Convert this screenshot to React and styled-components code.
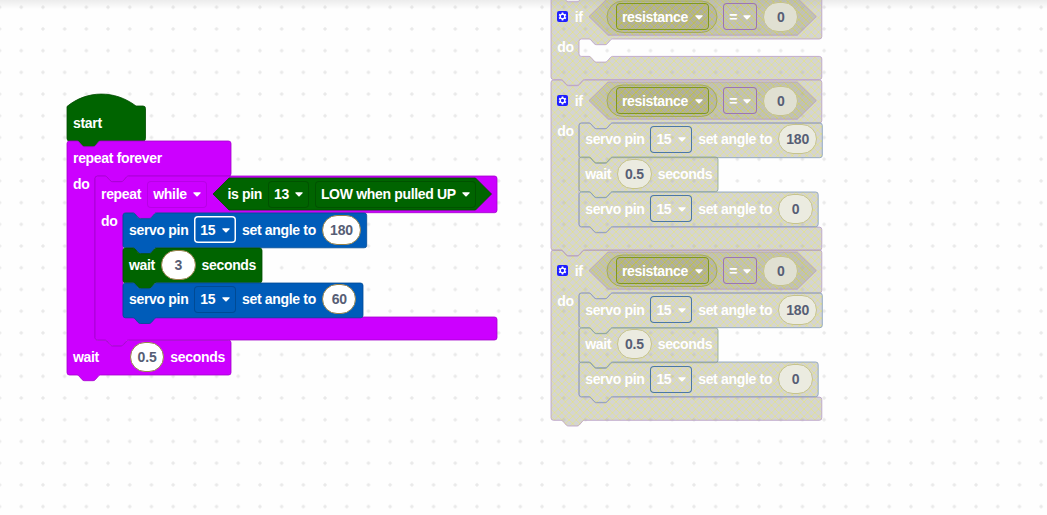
import React from "react";
import styled, { createGlobalStyle } from "styled-components";

const GlobalStyle = createGlobalStyle`
  html, body { margin: 0; padding: 0; height: 100%; overflow: hidden; background: #fefefe; }
  *, *::before, *::after { box-sizing: border-box; }
`;

const THEMES = {
  start: { fill: "#006400", stroke: "#004b00" },
  loop: { fill: "#cc00ff", stroke: "#a300cc" },
  servo: { fill: "#005cb9", stroke: "#004a94" },
  offLoop: { fill: "url(#disabled)", opacity: 0.5, stroke: "#b79cc6" },
  offServo: { fill: "url(#disabled)", opacity: 0.5, stroke: "#7f9bbb" },
  offWait: { fill: "url(#disabled)", opacity: 0.5, stroke: "#8aa68a" },
  offVar: { fill: "url(#disabled)", opacity: 0.5, stroke: "#9da647" },
};

const HATCH = `
  repeating-linear-gradient(45deg, rgba(204, 204, 0, .18) 0 .8px, transparent .8px 5.11px),
  repeating-linear-gradient(-45deg, rgba(204, 204, 0, .18) 0 .8px, transparent .8px 5.11px),
  rgba(140, 140, 100, .14)`;

const Workspace = styled.main`
  position: relative;
  width: 1047px;
  height: 515px;
  overflow: hidden;
  background: #fefefe;
  font: bold 14px/16px "Liberation Sans", Arial, sans-serif;
  letter-spacing: -0.32px;
  color: #fff;
  white-space: nowrap;
`;

const Backdrop = styled.svg`
  position: absolute;
  top: 0;
  left: 0;
  overflow: visible;
  pointer-events: none;
`;

const TopShade = styled.div`
  position: absolute;
  top: 0;
  left: 0;
  right: 0;
  height: 9px;
  background: linear-gradient(rgba(0, 0, 0, 0.07), rgba(0, 0, 0, 0));
`;

const Stack = styled.section`
  position: absolute;
  left: ${(p) => p.$x}px;
  top: ${(p) => p.$y}px;
  display: flex;
  flex-direction: column;
  align-items: flex-start;
`;

const BlockBox = styled.div`
  position: relative;
  flex: none;
  width: ${(p) => p.$w}px;
  height: ${(p) => p.$h}px;
`;

const Row = styled.div`
  position: relative;
  display: flex;
  align-items: center;
  gap: 6px;
  height: ${(p) => p.$h}px;
  margin-top: ${(p) => p.$top || 0}px;
  padding: 0 0 1.4px 6px;
`;

const Mouth = styled.div`
  position: relative;
  display: flex;
  align-items: flex-start;
  height: ${(p) => p.$h}px;
`;

const DoLabel = styled.span`
  flex: none;
  width: 28px;
  padding-left: 6px;
`;

const Nested = styled.div`
  display: flex;
  flex-direction: column;
  align-items: flex-start;
`;

const Label = styled.span`
  flex: none;
  position: relative;
  width: ${(p) => (p.$w ? `${p.$w}px` : "auto")};
`;

const DropdownBox = styled.span`
  position: relative;
  flex: none;
  display: flex;
  align-items: center;
  justify-content: space-between;
  width: ${(p) => p.$w}px;
  height: 27px;
  padding: 0 6px;
  border-radius: 4px;
  box-shadow: inset 0 0 0 ${(p) => (p.$strong ? 1.5 : 1)}px ${(p) => p.$edge};
  background: ${(p) => p.$bg || "transparent"};
`;

const Arrow = styled.svg`
  flex: none;
  margin-top: 1px;
`;

const NumberField = styled.span`
  position: relative;
  flex: none;
  display: flex;
  align-items: center;
  justify-content: center;
  width: ${(p) => p.$w || 34.5}px;
  height: 30px;
  border: 1px solid ${(p) => (p.$off ? "#c6c38c" : "#97824a")};
  border-radius: 15px;
  background: ${(p) => (p.$off ? p.$bg || "#ebebe0" : "#fff")};
  color: #575e75;
  letter-spacing: -0.2px;
`;

const ValueBox = styled.span`
  position: relative;
  flex: none;
  display: flex;
  align-items: center;
  gap: 6px;
  width: ${(p) => p.$w}px;
  height: ${(p) => p.$h}px;
  padding-left: ${(p) => p.$pad}px;
`;

const Gear = styled.svg`
  position: relative;
  flex: none;
  margin-right: 0.5px;
`;

const NOTCH_R = "q1 0 1.8 .8 l3.4 3.9 q.9 1 2.2 1 h8.7 q1.3 0 2.2 -1 l3.4 -3.9 q.8 -.8 1.8 -.8";
const NOTCH_L = "q-1 0 -1.8 .8 l-3.4 3.9 q-.9 1 -2.2 1 h-8.7 q-1.3 0 -2.2 -1 l-3.4 -3.9 q-.8 -.8 -1.8 -.8";

const right = (w, h) => `H${w - 2.5} q2.5 0 2.5 2.5 V${h - 2.5} q0 2.5 -2.5 2.5`;
const top = (y = 0) => `M0 ${y + 2.5} q0 -2.5 2.5 -2.5 H10 ${NOTCH_R}`;
const bottom = (h) => `H33.5 ${NOTCH_L} H2.5 q-2.5 0 -2.5 -2.5 Z`;

const simplePath = (w, h) => `${top()} ${right(w, h)} ${bottom(h)}`;

const hatPath = (w, h) =>
  `M0 12.5 C20 -4 48 -4 69 12 H${w - 2.5} q2.5 0 2.5 2.5 V${h - 2.5} q0 2.5 -2.5 2.5 ${bottom(h)}`;

const mouthPath = (w, head, mouth, foot, footW) => {
  const y2 = head + mouth;
  return `${top()} ${right(w, head)} H61.5 ${NOTCH_L} H30.5 q-2.5 0 -2.5 2.5 V${y2 - 2.5}
    q0 2.5 2.5 2.5 H38 ${NOTCH_R} ${right(footW, y2 + foot)} ${bottom(y2 + foot)}`;
};

const hexPath = (w, h, t) => `M${t} 0 H${w - t} L${w} ${h / 2} L${w - t} ${h} H${t} L0 ${h / 2} Z`;

function Shape({ d, theme }) {
  const t = THEMES[theme];
  return (
    <Backdrop width="1" height="1">
      <path d={d} fill={t.fill} fillOpacity={t.opacity || 1} stroke={t.stroke} strokeWidth="0.8" />
    </Backdrop>
  );
}

function Dropdown({ children, w, edge, bg, strong }) {
  return (
    <DropdownBox $w={w} $edge={edge} $bg={bg} $strong={strong}>
      {children}
      <Arrow width="8" height="5" viewBox="0 0 8 5">
        <path d="M.9 .2h6.2q1.1.3.4 1.1L4.6 4.2q-.6.5-1.2 0L.5 1.3Q-.2.5.9.2z" fill="#fff" />
      </Arrow>
    </DropdownBox>
  );
}

function ServoBlock({ angle, w, off, active, h = 34.8 }) {
  const edge = off ? "#4a78a5" : active ? "#fff" : "#004a94";
  return (
    <BlockBox $w={w} $h={h}>
      <Shape d={simplePath(w, h)} theme={off ? "offServo" : "servo"} />
      <Row $h={h}>
        <Label $w={59.2}>servo pin</Label>
        <Dropdown w={41.8} edge={edge} strong={active}>15</Dropdown>
        <Label $w={74}>set angle to</Label>
        <NumberField $off={off} $w={angle === "180" ? 39 : 34.5}>{angle}</NumberField>
      </Row>
    </BlockBox>
  );
}

function WaitBlock({ time, off, h = 34.8 }) {
  return (
    <BlockBox $w={139} $h={h}>
      <Shape d={simplePath(139, h)} theme={off ? "offWait" : "start"} />
      <Row $h={h}>
        <Label $w={26}>wait</Label>
        <NumberField $off={off}>{time}</NumberField>
        <Label>seconds</Label>
      </Row>
    </BlockBox>
  );
}

function StartBlock() {
  return (
    <BlockBox $w={78.5} $h={47}>
      <Shape d={hatPath(78.5, 47)} theme="start" />
      <Row $h={35} $top={12}>
        <Label>start</Label>
      </Row>
    </BlockBox>
  );
}

function RepeatWhile() {
  return (
    <BlockBox $w={402} $h={164}>
      <Shape d={mouthPath(402, 36.7, 104.3, 23, 402)} theme="loop" />
      <Row $h={36.7}>
        <Label $w={40.3}>repeat</Label>
        <Dropdown w={59.3} edge="#b800e6">while</Dropdown>
        <ValueBox $w={278.5} $h={32} $pad={14.8}>
          <Shape d={hexPath(278.5, 32, 16)} theme="start" />
          <Label $w={34.7}>is pin</Label>
          <Dropdown w={40.8} edge="#005200">13</Dropdown>
          <Dropdown w={161.5} edge="#005200">LOW when pulled UP</Dropdown>
        </ValueBox>
      </Row>
      <Mouth $h={104.3}>
        <DoLabel>do</DoLabel>
        <Nested>
          <ServoBlock angle="180" w={243.7} active />
          <WaitBlock time="3" />
          <ServoBlock angle="60" w={240} />
        </Nested>
      </Mouth>
    </BlockBox>
  );
}

function RepeatForever() {
  return (
    <BlockBox $w={164} $h={234}>
      <Shape d={mouthPath(164, 35.2, 164, 34.8, 164)} theme="loop" />
      <Row $h={35.2}>
        <Label>repeat forever</Label>
      </Row>
      <Mouth $h={164}>
        <DoLabel>do</DoLabel>
        <Nested>
          <RepeatWhile />
        </Nested>
      </Mouth>
      <Row $h={34.8}>
        <Label $w={50.8}>wait</Label>
        <NumberField>0.5</NumberField>
        <Label>seconds</Label>
      </Row>
    </BlockBox>
  );
}

function IfBlock({ mouth, children }) {
  const head = 43;
  const foot = 23.2;
  return (
    <BlockBox $w={270.8} $h={head + mouth + foot}>
      <Shape d={mouthPath(270.8, head, mouth, foot, 270.8)} theme="offLoop" />
      <Row $h={head}>
        <Gear width="11" height="11" viewBox="0 0 11 11">
          <rect width="11" height="11" rx="2" fill="#1f1fff" />
          <path d="M5.5 1.6V9.4M2.1 3.55L8.9 7.45M2.1 7.45L8.9 3.55" stroke="#fff" strokeWidth="1.7" />
          <circle cx="5.5" cy="5.5" r="2.3" fill="#1f1fff" stroke="#fff" strokeWidth="1.3" />
        </Gear>
        <Label $w={8}>if</Label>
        <ValueBox $w={227.3} $h={37.2} $pad={18.5}>
          <Shape d={hexPath(227.3, 37.2, 19)} theme="offLoop" />
          <ValueBox $w={110} $h={31.5} $pad={8.7}>
            <Shape
              d="M15.75 0 H94.25 A15.75 15.75 0 0 1 94.25 31.5 H15.75 A15.75 15.75 0 0 1 15.75 0 Z"
              theme="offVar"
            />
            <Dropdown w={93} edge="#7f991f" bg={HATCH}>resistance</Dropdown>
          </ValueBox>
          <Dropdown w={34.3} edge="#9c74b4">=</Dropdown>
          <NumberField $off $bg="#e0e0d2">0</NumberField>
        </ValueBox>
      </Row>
      <Mouth $h={mouth}>
        <DoLabel>do</DoLabel>
        <Nested>{children}</Nested>
      </Mouth>
    </BlockBox>
  );
}

function ServoSteps() {
  return (
    <>
      <ServoBlock off angle="180" w={243.3} h={34.7} />
      <WaitBlock off time="0.5" h={34.7} />
      <ServoBlock off angle="0" w={239.2} h={34.7} />
    </>
  );
}

export default function App() {
  return (
    <>
      <GlobalStyle />
      <Workspace>
        <Backdrop width="1047" height="515">
          <defs>
            <pattern id="grid" x="-11.3" y="-3.6" width="21.7" height="21.71" patternUnits="userSpaceOnUse">
              <path d="M8.9 10.85h3.9M10.85 8.9v3.9" stroke="#dcdcdc" strokeWidth="0.8" />
            </pattern>
            <pattern id="disabled" width="7.23" height="7.23" patternUnits="userSpaceOnUse">
              <rect width="7.23" height="7.23" fill="#aaa" />
              <path d="M0 0L7.23 7.23M7.23 0L0 7.23" stroke="#cc0" strokeWidth="0.72" />
            </pattern>
          </defs>
          <rect width="1047" height="515" fill="url(#grid)" />
        </Backdrop>
        <TopShade />
        <Stack $x={67} $y={94.2}>
          <StartBlock />
          <RepeatForever />
        </Stack>
        <Stack $x={551.2} $y={-3.9}>
          <IfBlock mouth={17.4} />
          <IfBlock mouth={104.1}>
            <ServoSteps />
          </IfBlock>
          <IfBlock mouth={104.1}>
            <ServoSteps />
          </IfBlock>
        </Stack>
      </Workspace>
    </>
  );
}
